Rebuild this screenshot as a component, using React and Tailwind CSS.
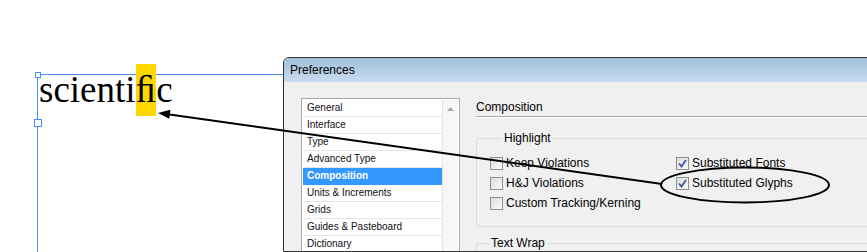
import React from 'react';

const ui = { fontFamily: '"Liberation Sans", Arial, sans-serif' };

const sections = [
    'General',
    'Interface',
    'Type',
    'Advanced Type',
    'Composition',
    'Units & Increments',
    'Grids',
    'Guides & Pasteboard',
    'Dictionary',
];

function Checkbox({ checked, label }) {
    return (
        <div className="flex h-[20px] items-center">
            <span className="flex h-[13px] w-[13px] flex-none items-center justify-center border border-[#8e8f8f] bg-gradient-to-br from-[#dcdcdc] to-[#fafafa]">
                {checked && (
                    <svg width="9" height="9" viewBox="0 0 9 9">
                        <path d="M1 4.5 L3.5 7.5 L8 1" fill="none" stroke="#3d55a5" strokeWidth="1.8" />
                    </svg>
                )}
            </span>
            <span className="ml-[3px] text-[12px] leading-[15px] text-black">{label}</span>
        </div>
    );
}

function GroupBox({ title, children, className = '' }) {
    return (
        <div className={`rounded-[3px] border border-[#d3dbe0] ${className}`}>
            <div className="-mt-[8px] ml-[12px] w-fit bg-[#f0f0f0] px-[2px] text-[12px] leading-[15px] text-black">
                {title}
            </div>
            {children}
        </div>
    );
}

export default function App() {
    return (
        <div className="relative flex h-[252px] w-[867px] overflow-hidden bg-white" style={ui}>
            {/* Text frame */}
            <div className="relative ml-[37px] mt-[74px] h-[200px] w-[247px] flex-none border-l border-t border-[#4a8ef5]">
                <span className="absolute -left-[3px] -top-[3px] h-[6px] w-[6px] border border-[#4a8ef5] bg-white" />
                <span className="absolute -left-[4px] top-[44px] h-[8px] w-[8px] border border-[#4a8ef5] bg-white" />
                <p
                    className="-mt-[11px] pl-[1px] text-[37px] leading-[52px] text-black"
                    style={{ fontFamily: '"Liberation Serif", "Times New Roman", serif' }}
                >
                    scienti<span className="inline-block h-[52px] bg-[#ffd600] align-top">ﬁ</span>c
                </p>
            </div>

            {/* Preferences dialog */}
            <div className="relative mt-[57px] w-[620px] flex-none -ml-[1px] overflow-hidden rounded-tl-[6px] border border-[#333] bg-[#f0f0f0]">
                <div className="flex h-[24px] items-center bg-gradient-to-b from-[#a2bedb] to-[#c8dcf0] pl-[6px] text-[12px] text-black">
                    Preferences
                </div>
                <div className="flex pl-[17px] pt-[16px]">
                    {/* section list */}
                    <div className="flex h-[200px] w-[159px] flex-none border border-[#aaaaaa] bg-white p-[1px]">
                        <div className="w-[139px] flex-none">
                            {sections.map((s) => (
                                <div
                                    key={s}
                                    className={`h-[17px] border-b pl-[4px] text-[10px] leading-[16px] ${
                                        s === 'Composition'
                                            ? 'border-[#3399ff] bg-[#3399ff] font-bold text-white'
                                            : 'border-[#e6e6e6] text-[#111]'
                                    }`}
                                >
                                    {s}
                                </div>
                            ))}
                        </div>
                        <div className="flex flex-1 justify-center border-l border-[#e4e4e4] bg-[#f7f7f7] pt-[7px]">
                            <svg width="7" height="4" viewBox="0 0 7 4">
                                <path d="M0 4 L3.5 0 L7 4 Z" fill="#a8a8a8" />
                            </svg>
                        </div>
                    </div>

                    {/* right panel */}
                    <div className="ml-[16px] flex-1">
                        <div className="h-[19px] border-b border-[#a8a8a8] text-[12px] leading-[18px] text-black">
                            Composition
                        </div>
                        <div className="h-px bg-white" />
                        <GroupBox title="Highlight" className="mt-[20px] pb-[13px] pl-[13px]">
                            <div className="mt-[7px] flex">
                                <div className="w-[186px]">
                                    <Checkbox label="Keep Violations" />
                                    <Checkbox label="H&J Violations" />
                                    <Checkbox label="Custom Tracking/Kerning" />
                                </div>
                                <div>
                                    <Checkbox checked label="Substituted Fonts" />
                                    <Checkbox checked label="Substituted Glyphs" />
                                </div>
                            </div>
                        </GroupBox>
                        <GroupBox title="Text Wrap" className="mt-[16px] h-[40px]" />
                    </div>
                </div>
            </div>

            {/* Annotation */}
            <svg className="pointer-events-none absolute inset-0" width="867" height="252">
                <line x1="662" y1="184" x2="166" y2="114" stroke="#000" strokeWidth="2" />
                <polygon points="158,113 170.4,109.7 169.3,118.7" fill="#000" />
                <ellipse cx="745" cy="185" rx="84" ry="17.5" fill="none" stroke="#000" strokeWidth="2" />
            </svg>
        </div>
    );
}
